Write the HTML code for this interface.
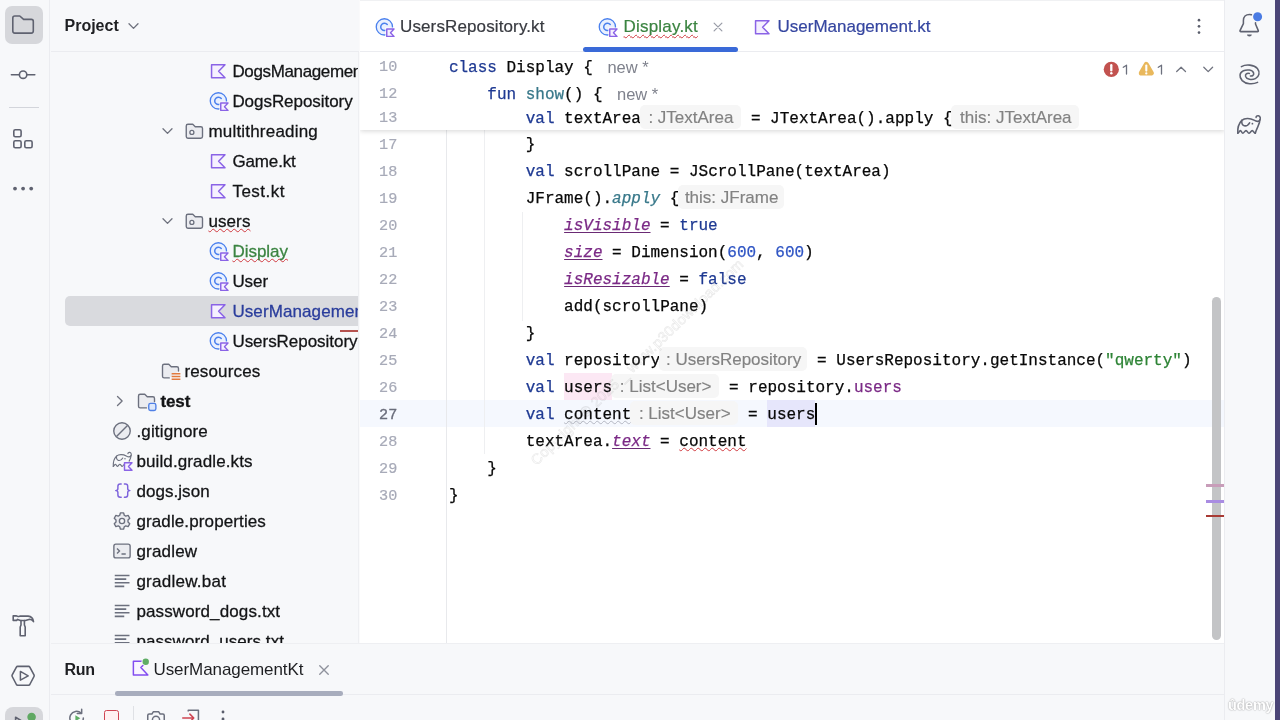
<!DOCTYPE html>
<html>
<head>
<meta charset="utf-8">
<title>Display.kt</title>
<style>
*{box-sizing:border-box;margin:0;padding:0}
html,body{width:1280px;height:720px;overflow:hidden;background:#f7f8fa;font-family:"Liberation Sans",sans-serif;color:#1e1f22}
.abs{position:absolute}
#root{position:relative;width:1280px;height:720px;overflow:hidden;background:#f7f8fa;will-change:transform}
#lstripe{left:0;top:0;width:50px;height:720px;background:#f7f8fa;border-right:1px solid #ebecf0}
#rstripe{left:1224px;top:0;width:52px;height:720px;background:#f7f8fa;border-left:1px solid #ebecf0}
#redge{left:1275px;top:0;width:5px;height:720px;background:#4b4577}
#proj{left:51px;top:0;width:308px;height:643px;background:#f7f8fa;overflow:hidden}
#projhead{left:0;top:0;width:308px;height:52px;border-bottom:1px solid #ebecf0;background:#f7f8fa;z-index:2}
.row{position:absolute;height:30px;line-height:30px;font-size:17px;white-space:nowrap;color:#131416;-webkit-text-stroke:.28px}
.row.green{color:#3b8441}
.row.blue{color:#2a3d9c}
.row.bold{font-weight:700}
.sqr{text-decoration:underline wavy #d03a40 1.45px;text-underline-offset:.8px;text-decoration-skip-ink:none}
#editor{left:359px;top:0;width:865px;height:643px;background:#fff;overflow:hidden;border-left:1px solid #fafafb}
#tabs{left:0;top:0;width:865px;height:52px;border-bottom:1px solid #ebecf0;background:#fff;z-index:5}
.tab{position:absolute;top:0;height:52px;line-height:53px;font-size:17px;white-space:nowrap;color:#1e1f22;-webkit-text-stroke:.2px}
.code{font-family:"Liberation Mono",monospace;font-size:16px;white-space:pre;color:#080808;-webkit-text-stroke:.25px}
.ln{position:absolute;left:0;width:865px;height:27px;line-height:27px}
.ln.cur{background:#f5f8fe}
.ln .n{position:absolute;left:0;width:37.3px;text-align:right;color:#a7aab8;font-family:"Liberation Mono",monospace;font-size:15.2px;margin-top:.3px;-webkit-text-stroke:.2px}
.ln.cur .n{color:#6a6d7b;-webkit-text-stroke:.35px}
.ln .c{position:absolute;top:0}
.kw{color:#1f3a93}
.num{color:#2f55c4}
.str{color:#2e8436}
.prop{color:#7b2a86}
.fn{color:#38788a}
.ext{color:#38788a;font-style:italic}
.ip{color:#7b2a86;font-style:italic;text-decoration:underline;text-decoration-thickness:1.3px;text-underline-offset:1.6px;text-decoration-color:#6a2a74}
.err{text-decoration:underline wavy #d03a40 1.45px;text-underline-offset:1.3px;text-decoration-skip-ink:none}
.unused{text-decoration:underline wavy #b4b7c2 1.2px;text-underline-offset:1.3px;text-decoration-skip-ink:none}
.hlw{background:#fce8f4}
.hlr{background:#e6e6fb}
.hint{position:absolute;font-family:"Liberation Sans",sans-serif;font-size:17px;color:#828282;-webkit-text-stroke:.15px;background:#f6f6f6;border-radius:5px;height:24px;padding-left:1.5px;line-height:26px;top:1.5px;text-align:center;white-space:pre}
.lens{position:absolute;font-family:"Liberation Sans",sans-serif;font-size:16.5px;color:#7f828d;top:0;white-space:pre}
#sticky{left:0;top:52px;width:865px;height:77.5px;background:#fff;z-index:4;box-shadow:0 1px 5px rgba(0,0,0,.17);overflow:hidden}
#codearea{left:0;top:0;width:865px;height:643px}
.guide{position:absolute;width:1px;background:#e8e9ec;z-index:1}
#bottom{left:51px;top:643px;width:1173px;height:77px;background:#f7f8fa;border-top:1px solid #eeeff2}
</style>
</head>
<body>
<div id="root">

<!-- PROJECT PANEL -->
<div id="proj" class="abs">
<svg class="abs" style="left:157.4px;top:61px" width="20" height="20" viewBox="0 0 16 16" overflow="visible" ><path d="M2.85 3H13.6L8.5 8.2L13.6 13.45H2.85Z" fill="#f5f0ff" stroke="#8a63e6" stroke-width="1.2" stroke-linejoin="round"/></svg><div class="row" style="left:181.4px;top:56.9px;letter-spacing:-0.360px">DogsManagement.kt</div>
<svg class="abs" style="left:157.4px;top:91px" width="20" height="20" viewBox="0 0 16 16" overflow="visible" ><circle cx="8.3" cy="7.9" r="6.5" fill="#e9f0fe" stroke="#4a80ee" stroke-width="1.05"/><path d="M10.6 6.0A2.95 2.95 0 1 0 10.6 9.8" fill="none" stroke="#4a80ee" stroke-width="1.2" stroke-linecap="round"/><path d="M9.1 8.4H17V17H9.1Z" fill="#f7f8fa" class="bdg"/><path d="M10.2 9.6H16L13.2 12.55L16 15.5H10.2Z" fill="#f5f0ff" stroke="#8a63e6" stroke-width="1.15" stroke-linejoin="round"/></svg><div class="row" style="left:181.4px;top:86.9px;letter-spacing:-0.047px">DogsRepository</div>
<svg class="abs" style="left:107px;top:121px" width="20" height="20" viewBox="0 0 16 16" overflow="visible" ><path d="M4 6.2L7.6 9.9L11.2 6.2" fill="none" stroke="#70737f" stroke-width="1.05" stroke-linecap="round" stroke-linejoin="round"/></svg><svg class="abs" style="left:133.4px;top:121px" width="20" height="20" viewBox="0 0 16 16" overflow="visible" ><path d="M1.8 3.9V12.4Q1.8 13.75 3.15 13.75H13.45Q14.8 13.75 14.8 12.4V5.9Q14.8 4.55 13.45 4.55H9L7 2.55H3.15Q1.8 2.55 1.8 3.9Z" fill="#ebecf0" stroke="#6c707e" stroke-width="1.1" stroke-linejoin="round"/><circle cx="6.3" cy="9.1" r="1.6" fill="#f7f8fa" stroke="#6c707e" stroke-width="1.05"/></svg><div class="row" style="left:157.4px;top:116.9px;letter-spacing:0.201px">multithreading</div>
<svg class="abs" style="left:157.4px;top:151px" width="20" height="20" viewBox="0 0 16 16" overflow="visible" ><path d="M2.85 3H13.6L8.5 8.2L13.6 13.45H2.85Z" fill="#f5f0ff" stroke="#8a63e6" stroke-width="1.2" stroke-linejoin="round"/></svg><div class="row" style="left:181.4px;top:146.9px;letter-spacing:-0.136px">Game.kt</div>
<svg class="abs" style="left:157.4px;top:181px" width="20" height="20" viewBox="0 0 16 16" overflow="visible" ><path d="M2.85 3H13.6L8.5 8.2L13.6 13.45H2.85Z" fill="#f5f0ff" stroke="#8a63e6" stroke-width="1.2" stroke-linejoin="round"/></svg><div class="row" style="left:181.4px;top:176.9px;letter-spacing:0.496px">Test.kt</div>
<svg class="abs" style="left:107px;top:211px" width="20" height="20" viewBox="0 0 16 16" overflow="visible" ><path d="M4 6.2L7.6 9.9L11.2 6.2" fill="none" stroke="#70737f" stroke-width="1.05" stroke-linecap="round" stroke-linejoin="round"/></svg><svg class="abs" style="left:133.4px;top:211px" width="20" height="20" viewBox="0 0 16 16" overflow="visible" ><path d="M1.8 3.9V12.4Q1.8 13.75 3.15 13.75H13.45Q14.8 13.75 14.8 12.4V5.9Q14.8 4.55 13.45 4.55H9L7 2.55H3.15Q1.8 2.55 1.8 3.9Z" fill="#ebecf0" stroke="#6c707e" stroke-width="1.1" stroke-linejoin="round"/><circle cx="6.3" cy="9.1" r="1.6" fill="#f7f8fa" stroke="#6c707e" stroke-width="1.05"/></svg><div class="row" style="left:157.4px;top:206.9px;letter-spacing:0.104px"><span class="sqr">users</span></div>
<svg class="abs" style="left:157.4px;top:241px" width="20" height="20" viewBox="0 0 16 16" overflow="visible" ><circle cx="8.3" cy="7.9" r="6.5" fill="#e9f0fe" stroke="#4a80ee" stroke-width="1.05"/><path d="M10.6 6.0A2.95 2.95 0 1 0 10.6 9.8" fill="none" stroke="#4a80ee" stroke-width="1.2" stroke-linecap="round"/><path d="M9.1 8.4H17V17H9.1Z" fill="#f7f8fa" class="bdg"/><path d="M10.2 9.6H16L13.2 12.55L16 15.5H10.2Z" fill="#f5f0ff" stroke="#8a63e6" stroke-width="1.15" stroke-linejoin="round"/></svg><div class="row green" style="left:181.4px;top:236.9px;letter-spacing:-0.021px"><span class="sqr">Display</span></div>
<svg class="abs" style="left:157.4px;top:271px" width="20" height="20" viewBox="0 0 16 16" overflow="visible" ><circle cx="8.3" cy="7.9" r="6.5" fill="#e9f0fe" stroke="#4a80ee" stroke-width="1.05"/><path d="M10.6 6.0A2.95 2.95 0 1 0 10.6 9.8" fill="none" stroke="#4a80ee" stroke-width="1.2" stroke-linecap="round"/><path d="M9.1 8.4H17V17H9.1Z" fill="#f7f8fa" class="bdg"/><path d="M10.2 9.6H16L13.2 12.55L16 15.5H10.2Z" fill="#f5f0ff" stroke="#8a63e6" stroke-width="1.15" stroke-linejoin="round"/></svg><div class="row" style="left:181.4px;top:266.9px;letter-spacing:-0.077px">User</div>
<div class="abs" style="left:14px;top:296px;width:303px;height:30px;background:#d9dade;border-radius:5px"></div><svg class="abs" style="left:157.4px;top:301px" width="20" height="20" viewBox="0 0 16 16" overflow="visible" ><path d="M2.85 3H13.6L8.5 8.2L13.6 13.45H2.85Z" fill="#f5f0ff" stroke="#8a63e6" stroke-width="1.2" stroke-linejoin="round"/></svg><div class="row blue" style="left:181.4px;top:296.9px;letter-spacing:0.100px">UserManagement.kt</div>
<svg class="abs" style="left:157.4px;top:331px" width="20" height="20" viewBox="0 0 16 16" overflow="visible" ><circle cx="8.3" cy="7.9" r="6.5" fill="#e9f0fe" stroke="#4a80ee" stroke-width="1.05"/><path d="M10.6 6.0A2.95 2.95 0 1 0 10.6 9.8" fill="none" stroke="#4a80ee" stroke-width="1.2" stroke-linecap="round"/><path d="M9.1 8.4H17V17H9.1Z" fill="#f7f8fa" class="bdg"/><path d="M10.2 9.6H16L13.2 12.55L16 15.5H10.2Z" fill="#f5f0ff" stroke="#8a63e6" stroke-width="1.15" stroke-linejoin="round"/></svg><div class="row" style="left:181.4px;top:326.9px;letter-spacing:-0.037px">UsersRepository</div>
<svg class="abs" style="left:109.4px;top:361px" width="20" height="20" viewBox="0 0 16 16" overflow="visible" ><path d="M7.4 13.5H3.3Q2 13.5 2 12.2V3.9Q2 2.6 3.3 2.6H7L9 4.6H13.5Q14.8 4.6 14.8 5.9V8" fill="#ebecf0" stroke="#6c707e" stroke-width="1.1" stroke-linejoin="round" stroke-linecap="round"/><path d="M9.3 10.2H16.3M9.3 12.4H16.3M9.3 14.6H16.3" stroke="#e27a3e" stroke-width="1.25"/></svg><div class="row" style="left:133.4px;top:356.9px;letter-spacing:0.151px">resources</div>
<svg class="abs" style="left:59px;top:391px" width="20" height="20" viewBox="0 0 16 16" overflow="visible" ><path d="M6 4.4L9.7 8L6 11.6" fill="none" stroke="#70737f" stroke-width="1.05" stroke-linecap="round" stroke-linejoin="round"/></svg><svg class="abs" style="left:85.4px;top:391px" width="20" height="20" viewBox="0 0 16 16" overflow="visible" ><path d="M8.4 13.5H3.3Q2 13.5 2 12.2V3.9Q2 2.6 3.3 2.6H7L9 4.6H13.5Q14.8 4.6 14.8 5.9V8.5" fill="#ebecf0" stroke="#6c707e" stroke-width="1.1" stroke-linejoin="round" stroke-linecap="round"/><rect x="10.2" y="9.9" width="5.7" height="5.7" rx="1.4" fill="#dde8fb" stroke="#4f80e6" stroke-width="1.1"/></svg><div class="row bold" style="left:109.4px;top:386.9px;letter-spacing:-0.109px">test</div>
<svg class="abs" style="left:61.4px;top:421px" width="20" height="20" viewBox="0 0 16 16" overflow="visible" ><circle cx="8" cy="8" r="6.6" fill="#ebecf0" stroke="#6c707e" stroke-width="1.1"/><path d="M3.6 12.4L12.4 3.6" stroke="#6c707e" stroke-width="1.1"/></svg><div class="row" style="left:85.4px;top:416.9px;letter-spacing:0.166px">.gitignore</div>
<svg class="abs" style="left:61.4px;top:451px" width="20" height="20" viewBox="0 0 16 16" overflow="visible" ><g transform="scale(0.8)"><g transform="translate(1.3 1.2) scale(0.8) translate(-11.8 -15.5)" fill="none" stroke="#6c707e" stroke-width="1.45" stroke-linecap="round" stroke-linejoin="round"><path d="M11.8 33.2C11.4 27.5 13.2 23 15.8 20.4C18.5 18 24 17.8 28 20.2C30 21.4 32.2 21.8 33.4 20.6C35 19 34.4 16.2 32.4 15.8C31 15.5 29.9 16.4 30.1 17.4"/><path d="M33.9 19.8C34 22 33 24.4 31.6 26.6"/><path d="M11.8 33.2C12.8 33.2 13.4 30.6 14.4 30.6C15.4 30.6 15.8 33.2 16.8 33.2C18 33.2 18.8 30.6 20 30.6C21.2 30.6 21.8 33.2 22.9 33.2C23.6 33.2 24.2 32 24.8 31.2"/><path d="M15.8 20.4C15.6 23 16.6 25.4 18.2 25.8C20.4 26.2 22.6 24.6 23.6 22.8"/><circle cx="26.4" cy="23.7" r="0.9" fill="#6c707e" stroke="none"/></g><path d="M12.5 11.8H20L16.5 15.6L20 19.3H12.5Z" fill="#f5f0ff" stroke="#8a63e6" stroke-width="1.45" stroke-linejoin="round"/></g></svg><div class="row" style="left:85.4px;top:446.9px;letter-spacing:0.122px">build.gradle.kts</div>
<svg class="abs" style="left:61.4px;top:481px" width="20" height="20" viewBox="0 0 16 16" overflow="visible" ><g transform="scale(0.8)" fill="none" stroke="#7d63dc" stroke-width="1.45" stroke-linecap="round" stroke-linejoin="round"><path d="M9.2 3H8.2Q5.9 3 5.9 5.2V7.6Q5.9 9.6 3.7 9.6Q5.9 9.6 5.9 11.6V14Q5.9 16.2 8.2 16.2H9.2"/><path d="M12.4 3H13.4Q15.7 3 15.7 5.2V7.6Q15.7 9.6 17.9 9.6Q15.7 9.6 15.7 11.6V14Q15.7 16.2 13.4 16.2H12.4"/></g></svg><div class="row" style="left:85.4px;top:476.9px;letter-spacing:0.058px">dogs.json</div>
<svg class="abs" style="left:61.4px;top:511px" width="20" height="20" viewBox="0 0 16 16" overflow="visible" ><path d="M6.7 1.5H9.3L9.8 3.4L11 4.1L12.9 3.5L14.2 5.8L12.8 7.2V8.8L14.2 10.2L12.9 12.5L11 11.9L9.8 12.6L9.3 14.5H6.7L6.2 12.6L5 11.9L3.1 12.5L1.8 10.2L3.2 8.8V7.2L1.8 5.8L3.1 3.5L5 4.1L6.2 3.4Z" fill="#ebecf0" stroke="#6c707e" stroke-width="1.1" stroke-linejoin="round"/><circle cx="8" cy="8" r="2.1" fill="#f7f8fa" stroke="#6c707e" stroke-width="1.1"/></svg><div class="row" style="left:85.4px;top:506.9px;letter-spacing:0.119px">gradle.properties</div>
<svg class="abs" style="left:61.4px;top:541px" width="20" height="20" viewBox="0 0 16 16" overflow="visible" ><rect x="1.5" y="2.5" width="13" height="11" rx="1.6" fill="#ebecf0" stroke="#6c707e" stroke-width="1.1"/><path d="M4 6L6 8L4 10M7.6 10.4H11" fill="none" stroke="#6c707e" stroke-width="1.1"/></svg><div class="row" style="left:85.4px;top:536.9px;letter-spacing:0.193px">gradlew</div>
<svg class="abs" style="left:61.4px;top:571px" width="20" height="20" viewBox="0 0 16 16" overflow="visible" ><path d="M2.2 3.6H14M2.2 6.5H11.4M2.2 9.4H14M2.2 12.3H9.8" stroke="#6c707e" stroke-width="1.25"/></svg><div class="row" style="left:85.4px;top:566.9px;letter-spacing:0.268px">gradlew.bat</div>
<svg class="abs" style="left:61.4px;top:601px" width="20" height="20" viewBox="0 0 16 16" overflow="visible" ><path d="M2.2 3.6H14M2.2 6.5H11.4M2.2 9.4H14M2.2 12.3H9.8" stroke="#6c707e" stroke-width="1.25"/></svg><div class="row" style="left:85.4px;top:596.9px;letter-spacing:0.121px">password_dogs.txt</div>
<svg class="abs" style="left:61.4px;top:631px" width="20" height="20" viewBox="0 0 16 16" overflow="visible" ><path d="M2.2 3.6H14M2.2 6.5H11.4M2.2 9.4H14M2.2 12.3H9.8" stroke="#6c707e" stroke-width="1.25"/></svg><div class="row" style="left:85.4px;top:626.9px;letter-spacing:0.064px">password_users.txt</div>
  <div class="abs" style="left:289px;top:330px;width:19px;height:2px;background:#b5524f"></div>
  <div id="projhead" class="abs">
    <div class="abs" style="left:13.5px;top:0;height:52px;line-height:51px;font-size:16px;font-weight:700;color:#1e1f22">Project</div>
    <svg class="abs" style="left:73px;top:16px" width="20" height="20" viewBox="0 0 16 16"><path d="M4 6.2L7.6 9.9L11.2 6.2" fill="none" stroke="#70737f" stroke-width="1.05" stroke-linecap="round" stroke-linejoin="round"/></svg>
  </div>
</div>

<div class="abs" style="left:358px;top:0;width:1px;height:643px;background:#eeeff2"></div>
<!-- EDITOR -->
<div id="editor" class="abs">
  <div id="codearea" class="abs">
    <div class="guide" style="left:85.6px;top:130px;height:513px"></div>
    <div class="guide" style="left:124.2px;top:130px;height:324px;background:#eeeff1"></div>
    <div class="guide" style="left:162.4px;top:212px;height:109px;background:#eeeff1"></div>
<div class="ln" style="top:130px"><span class="n" style="top:1.8px">17</span><span class="c code " style="left:88.90px;top:1.8px">        }</span></div>
<div class="ln" style="top:157px"><span class="n" style="top:1.8px">18</span><span class="c code kw" style="left:165.70px;top:1.8px">val</span><span class="c code " style="left:194.50px;top:1.8px"> scrollPane = JScrollPane(textArea)</span></div>
<div class="ln" style="top:184px"><span class="n" style="top:1.8px">19</span><span class="c code " style="left:88.90px;top:1.8px">        JFrame().</span><span class="c code ext" style="left:252.10px;top:1.8px">apply</span><span class="c code " style="left:300.10px;top:1.8px"> {</span><span class="hint" style="left:318.00px;width:105.80px;top:1.0px">this: JFrame</span></div>
<div class="ln" style="top:211px"><span class="n" style="top:1.8px">20</span><span class="c code ip" style="left:204.10px;top:1.8px">isVisible</span><span class="c code " style="left:290.50px;top:1.8px"> = </span><span class="c code kw" style="left:319.30px;top:1.8px">true</span></div>
<div class="ln" style="top:238px"><span class="n" style="top:1.8px">21</span><span class="c code ip" style="left:204.10px;top:1.8px">size</span><span class="c code " style="left:242.50px;top:1.8px"> = Dimension(</span><span class="c code num" style="left:367.30px;top:1.8px">600</span><span class="c code " style="left:396.10px;top:1.8px">, </span><span class="c code num" style="left:415.30px;top:1.8px">600</span><span class="c code " style="left:444.10px;top:1.8px">)</span></div>
<div class="ln" style="top:265px"><span class="n" style="top:1.8px">22</span><span class="c code ip" style="left:204.10px;top:1.8px">isResizable</span><span class="c code " style="left:309.70px;top:1.8px"> = </span><span class="c code kw" style="left:338.50px;top:1.8px">false</span></div>
<div class="ln" style="top:292px"><span class="n" style="top:1.8px">23</span><span class="c code " style="left:88.90px;top:1.8px">            add(scrollPane)</span></div>
<div class="ln" style="top:319px"><span class="n" style="top:1.8px">24</span><span class="c code " style="left:88.90px;top:1.8px">        }</span></div>
<div class="ln" style="top:346px"><span class="n" style="top:1.8px">25</span><span class="c code kw" style="left:165.70px;top:1.8px">val</span><span class="c code " style="left:194.50px;top:1.8px"> repository</span><span class="hint" style="left:298.80px;width:148.20px;top:1.0px">: UsersRepository</span><span class="c code " style="left:447.50px;top:1.8px"> = UsersRepository.getInstance(</span><span class="c code str" style="left:745.10px;top:1.8px">&quot;qwerty&quot;</span><span class="c code " style="left:821.90px;top:1.8px">)</span></div>
<div class="ln" style="top:373px"><span class="n" style="top:1.8px">26</span><span class="c code kw" style="left:165.70px;top:1.8px">val</span><span class="abs hlw" style="left:204.10px;top:0;width:48.00px;height:27px"></span><span class="c code " style="left:204.10px;top:1.8px">users</span><span class="hint" style="left:250.80px;width:108.20px;top:1.0px">: List&lt;User&gt;</span><span class="c code " style="left:359.50px;top:1.8px"> = repository.</span><span class="c code prop" style="left:493.90px;top:1.8px">users</span></div>
<div class="ln cur" style="top:400px"><span class="n" style="top:1.8px">27</span><span class="c code kw" style="left:165.70px;top:1.8px">val</span><span class="c code unused" style="left:204.10px;top:1.8px">content</span><span class="hint" style="left:270.00px;width:108.00px;top:1.0px">: List&lt;User&gt;</span><span class="c code " style="left:378.50px;top:1.8px"> = </span><span class="abs hlr" style="left:407.30px;top:0;width:48.00px;height:27px"></span><span class="c code " style="left:407.30px;top:1.8px">users</span><span class="abs" style="left:454.50px;top:3px;width:2px;height:22px;background:#000"></span></div>
<div class="ln" style="top:427px"><span class="n" style="top:1.8px">28</span><span class="c code " style="left:88.90px;top:1.8px">        textArea.</span><span class="c code ip" style="left:252.10px;top:1.8px">text</span><span class="c code " style="left:290.50px;top:1.8px"> = </span><span class="c code err" style="left:319.30px;top:1.8px">content</span></div>
<div class="ln" style="top:454px"><span class="n" style="top:1.8px">29</span><span class="c code " style="left:88.90px;top:1.8px">    }</span></div>
<div class="ln" style="top:481px"><span class="n" style="top:1.8px">30</span><span class="c code " style="left:88.90px;top:1.8px">}</span></div>
  </div>
  <div id="sticky" class="abs">
    <div class="abs" style="left:0;top:-52px;width:865px;height:200px">
<div class="ln" style="top:54.5px"><span class="n" style="top:-0.65px">10</span><span class="c code kw" style="left:88.90px;top:0.35px">class</span><span class="c code " style="left:136.90px;top:0.35px"> Display {</span><span class="lens" style="left:247.40px;top:-0.7px">new *</span></div>
<div class="ln" style="top:81.5px"><span class="n" style="top:-0.65px">12</span><span class="c code kw" style="left:127.30px;top:0.35px">fun</span><span class="c code fn" style="left:165.70px;top:0.35px">show</span><span class="c code " style="left:204.10px;top:0.35px">() {</span><span class="lens" style="left:257.00px;top:-0.7px">new *</span></div>
<div class="ln" style="top:106.0px"><span class="n" style="top:-1.0px">13</span><span class="c code kw" style="left:165.70px;top:-0.5px">val</span><span class="c code " style="left:194.50px;top:-0.5px"> textArea</span><span class="hint" style="left:279.60px;width:101.20px;top:-1px">: JTextArea</span><span class="c code " style="left:381.30px;top:-0.5px"> = JTextArea().apply {</span><span class="hint" style="left:591.20px;width:127.80px;top:-1px">this: JTextArea</span></div>
    </div>
  </div>
  <!-- inspections widget -->
  <svg class="abs" style="left:730px;top:50px;z-index:6" width="140" height="40" viewBox="1090 50 140 40" fill="none" stroke-linecap="round" stroke-linejoin="round">
    <circle cx="1111.3" cy="69.4" r="7.6" fill="#c2524f"/>
    <path d="M1111.3 65.2V70.4" stroke="#fff" stroke-width="2.3"/><circle cx="1111.3" cy="73.3" r="1.25" fill="#fff"/>
    <path d="M1123.3 67.3L1126.5 65.2V74" stroke="#6c707e" stroke-width="1.3"/>
    <path d="M1146.3 64.6L1151.2 73H1141.4Z" fill="#e9b85c" stroke="#e9b85c" stroke-width="5.2"/>
    <path d="M1146.3 65.6V70.6" stroke="#fff" stroke-width="2.1"/><circle cx="1146.3" cy="73.4" r="1.15" fill="#fff"/>
    <path d="M1158.3 67.3L1161.5 65.2V74" stroke="#6c707e" stroke-width="1.3"/>
    <path d="M1176.7 71.5L1181.1 67.3L1185.5 71.5" stroke="#70737f" stroke-width="1.3"/>
    <path d="M1203.8 67.2L1208.2 71.6L1212.6 67.2" stroke="#70737f" stroke-width="1.3"/>
  </svg>
  <!-- scrollbar -->
  <div class="abs" style="left:851.5px;top:297px;width:9.5px;height:343px;border-radius:5px;background:#c3c4c6"></div>
  <div class="abs" style="left:846px;top:484px;width:18px;height:2.5px;background:#c89db9"></div>
  <div class="abs" style="left:846px;top:500px;width:18px;height:2.5px;background:#a98ce2"></div>
  <div class="abs" style="left:846px;top:514.6px;width:18px;height:2.6px;background:#a83a34"></div>
  <!-- watermark -->
  <div class="abs" style="left:127px;top:353px;width:300px;height:18px;line-height:18px;text-align:center;font-size:14.4px;color:#fff;-webkit-text-stroke:.7px #555;opacity:.12;transform:rotate(-44deg);transform-origin:50% 50%;white-space:nowrap;letter-spacing:.25px;z-index:7">Copyright © 2025 _ www.p30download.com</div>

  <!-- TABS -->
  <div class="abs" style="left:0;top:0;width:865px;height:1px;background:#f0f1f3;z-index:8"></div>
  <div id="tabs" class="abs">
    <svg class="abs" style="left:13.5px;top:17px" width="20" height="20" viewBox="0 0 16 16" overflow="visible"><circle cx="8.3" cy="7.9" r="6.5" fill="#e9f0fe" stroke="#4a80ee" stroke-width="1.05"/><path d="M10.6 6.0A2.95 2.95 0 1 0 10.6 9.8" fill="none" stroke="#4a80ee" stroke-width="1.2" stroke-linecap="round"/><path d="M9.1 8.4H17V17H9.1Z" fill="#ffffff"/><path d="M10.2 9.6H16L13.2 12.55L16 15.5H10.2Z" fill="#f5f0ff" stroke="#8a63e6" stroke-width="1.15" stroke-linejoin="round"/></svg>
    <div class="tab" style="left:40px;letter-spacing:.125px;color:#383a40">UsersRepository.kt</div>
    <svg class="abs" style="left:237px;top:17px" width="20" height="20" viewBox="0 0 16 16" overflow="visible"><circle cx="8.3" cy="7.9" r="6.5" fill="#e9f0fe" stroke="#4a80ee" stroke-width="1.05"/><path d="M10.6 6.0A2.95 2.95 0 1 0 10.6 9.8" fill="none" stroke="#4a80ee" stroke-width="1.2" stroke-linecap="round"/><path d="M9.1 8.4H17V17H9.1Z" fill="#ffffff"/><path d="M10.2 9.6H16L13.2 12.55L16 15.5H10.2Z" fill="#f5f0ff" stroke="#8a63e6" stroke-width="1.15" stroke-linejoin="round"/></svg>
    <div class="tab" style="left:263.5px;color:#3b8441;letter-spacing:.2px"><span class="sqr" style="text-underline-offset:1.9px">Display.kt</span></div>
    <svg class="abs" style="left:348px;top:17px" width="20" height="20" viewBox="0 0 16 16"><path d="M4.9 4.9L11.1 11.1M11.1 4.9L4.9 11.1" stroke="#9a9da8" stroke-width="1" stroke-linecap="round"/></svg>
    <div class="abs" style="left:223px;top:47px;width:155px;height:5px;border-radius:2.5px;background:#3a6ad8"></div>
    <svg class="abs" style="left:391.5px;top:17px" width="20" height="20" viewBox="0 0 16 16"><path d="M2.85 3H13.6L8.5 8.2L13.6 13.45H2.85Z" fill="#f5f0ff" stroke="#8a63e6" stroke-width="1.2" stroke-linejoin="round"/></svg>
    <div class="tab" style="left:417.5px;color:#3546a0;letter-spacing:0px">UserManagement.kt</div>
    <svg class="abs" style="left:829px;top:16px" width="20" height="20" viewBox="0 0 16 16"><circle cx="8" cy="3.3" r="1.05" fill="#5a5d6b"/><circle cx="8" cy="8.25" r="1.05" fill="#5a5d6b"/><circle cx="8" cy="13.25" r="1.05" fill="#5a5d6b"/></svg>
  </div>
</div>

<!-- BOTTOM PANEL -->
<div id="bottom" class="abs">
  <div class="abs" style="left:13.5px;top:11px;height:30px;line-height:30px;font-size:16px;font-weight:700;letter-spacing:-.3px">Run</div>
  <svg class="abs" style="left:79.5px;top:14px" width="19" height="19" viewBox="0 0 16 16"><path d="M2 2.8H9.2M2 2.8V14.4H14.2L8.3 8L10.6 5.6" fill="#faf5ff" stroke="#834df0" stroke-width="1.25" stroke-linejoin="round" stroke-linecap="round"/><circle cx="12.4" cy="3.2" r="3.6" fill="#f7f8fa"/><circle cx="12.4" cy="3.2" r="2.7" fill="#5fad65"/></svg>
  <div class="abs" style="left:102.5px;top:11px;height:30px;line-height:30px;font-size:17px;letter-spacing:-.08px;white-space:nowrap">UserManagementKt</div>
  <svg class="abs" style="left:263px;top:16px" width="20" height="20" viewBox="0 0 16 16"><path d="M4.6 4.6L11.4 11.4M11.4 4.6L4.6 11.4" stroke="#8e919c" stroke-width="1.1" stroke-linecap="round"/></svg>
  <div class="abs" style="left:0;top:50px;width:1173px;height:1px;background:#ebecf0"></div>
  <div class="abs" style="left:64px;top:47px;width:228px;height:4.5px;border-radius:2.25px;background:#a8adbd"></div>
  
  <!-- toolbar (clipped) -->
  <svg class="abs" style="left:15px;top:63.3px" width="22" height="22" viewBox="0 0 16 16"><path d="M12.6 8A4.9 4.9 0 1 1 11 4.4" fill="none" stroke="#6c707e" stroke-width="1.1" stroke-linecap="round"/><path d="M11.4 1.6V4.8H8.2" fill="none" stroke="#6c707e" stroke-width="1.1" stroke-linecap="round" stroke-linejoin="round"/><path d="M6.8 6L10.4 8.2L6.8 10.4Z" fill="#5fad65"/></svg>
  <div class="abs" style="left:53px;top:65.5px;width:15px;height:15px;border:1.5px solid #cf4452;border-radius:2.5px;background:#fff0f1"></div>
  <div class="abs" style="left:82px;top:62px;width:1px;height:20px;background:#dfe1e5"></div>
  <svg class="abs" style="left:94px;top:63.5px" width="22" height="22" viewBox="0 0 16 16"><path d="M2 5.4Q2 4.4 3 4.4H5L6 2.8H10L11 4.4H13Q14 4.4 14 5.4V12Q14 13 13 13H3Q2 13 2 12Z" fill="none" stroke="#6c707e" stroke-width="1.1" stroke-linejoin="round"/><circle cx="8" cy="8.6" r="2.6" fill="none" stroke="#6c707e" stroke-width="1.1"/></svg>
  <svg class="abs" style="left:129px;top:63px" width="22" height="22" viewBox="0 0 16 16"><path d="M6 3.2V2.4H13.4V13.6H6V12.8" fill="none" stroke="#6c707e" stroke-width="1.1" stroke-linejoin="round"/><path d="M2 8H10M7.2 5.2L10 8L7.2 10.8" fill="none" stroke="#cf4452" stroke-width="1.1" stroke-linecap="round" stroke-linejoin="round"/></svg>
  <svg class="abs" style="left:162px;top:61px" width="20" height="20" viewBox="0 0 16 16"><circle cx="8" cy="5.6" r="1.15" fill="#5a5d6b"/><circle cx="8" cy="11.2" r="1.15" fill="#5a5d6b"/></svg>
</div>

<!-- LEFT STRIPE -->
<div id="lstripe" class="abs">
  <div class="abs" style="left:5px;top:6px;width:38px;height:38px;border-radius:7px;background:#d6d7db"></div>
  <div class="abs" style="left:5px;top:707.4px;width:38px;height:38px;border-radius:8px;background:#d6d7db"></div>
  <div class="abs" style="left:9px;top:107px;width:30px;height:1px;background:#d3d5db"></div>
  <svg class="abs" style="left:0;top:0" width="50" height="720" viewBox="0 0 50 720" fill="none" stroke="#5f6270" stroke-width="1.6" stroke-linejoin="round" stroke-linecap="round">
    <path d="M12.8 18Q12.8 16 14.8 16H19.8L23.6 19.4H31.3Q33.3 19.4 33.3 21.4V31.1Q33.3 33.1 31.3 33.1H14.8Q12.8 33.1 12.8 31.1Z"/>
    <path d="M11.4 74.7H19.2M27 74.7H34.8"/><circle cx="23.1" cy="74.7" r="3.7"/>
    <rect x="13.8" y="129.7" width="7.3" height="7" rx="1.5"/><rect x="13.8" y="140.7" width="7.3" height="7" rx="1.5"/><rect x="24.8" y="140.7" width="7.3" height="7" rx="1.5"/>
    <g fill="#5f6270" stroke="none"><circle cx="15" cy="188.6" r="1.9"/><circle cx="23.1" cy="188.6" r="1.9"/><circle cx="31.2" cy="188.6" r="1.9"/></g>
    <g transform="translate(0 600)">
      <path d="M13.2 15.9H16.4Q18 17 19.8 16.1H28.2C31.2 16.3 33 18.6 33.5 21.6C32.2 20 31 19.3 29.8 19.2L25.4 20.5H20.4L17.6 19.4L16.6 20.4H13.2Z"/>
      <path d="M21 20.6V25L20.2 27V35.8H25.2V27L24.4 25V20.6"/>
    </g>
    <path d="M17.6 666.4H28.6Q29.4 666.4 29.8 667.1L34 674.9Q34.4 675.7 34 676.5L29.8 684.5Q29.4 685.2 28.6 685.2H17.6Q16.8 685.2 16.4 684.5L12.2 676.5Q11.8 675.7 12.2 674.9L16.4 667.1Q16.8 666.4 17.6 666.4Z"/>
    <path d="M20.4 671.4L28.2 675.8L20.4 680.2Z" stroke-width="1.5"/>
    <path d="M15.6 717.2L30 726L15.6 734.8Z"/>
    <circle cx="31.6" cy="717.1" r="5.4" fill="#d6d7db" stroke="none"/>
    <circle cx="31.6" cy="717.1" r="4.3" fill="#5fa862" stroke="none"/>
  </svg>
</div>

<!-- RIGHT STRIPE -->
<div id="rstripe" class="abs">
  <svg class="abs" style="left:1px;top:0" width="50" height="150" viewBox="0 0 50 150" fill="none" stroke="#5f6270" stroke-width="1.55" stroke-linejoin="round" stroke-linecap="round">
    <path d="M25.4 14.7C24.8 14.5 24.1 14.4 23.4 14.4C19.8 14.4 17.4 17 17.4 20.6V23.6L14 30.6Q13.8 31.6 14.8 31.6H31.6Q32.6 31.6 32.3 30.6L29.5 24V22.8"/>
    <path d="M21 34.4H25.8A2.4 2.1 0 0 1 21 34.4Z" fill="#5f6270" stroke="none"/>
    <circle cx="31.6" cy="16.7" r="4.5" fill="#4a7be3" stroke="none"/>
    <g transform="translate(0 50)">
      <path d="M15.4 16.6C20 14 28 14.6 31.4 18.6C34.4 22.4 33 27 29.4 28.6C25.6 30.2 20.6 29.4 19.6 26.4C19 24.4 20.8 22.8 23.4 23.4"/>
      <path d="M31.6 32.4C27 34.6 20 34.4 16.2 30.6C12.8 27 13.4 22.6 17.4 20.8C21 19.2 26.6 19.8 27.6 23C28.2 25 26.4 26.4 24.4 26"/>
    </g>
    <g transform="translate(0 100)">
      <path d="M11.8 33.2C11.4 27.5 13.2 23 15.8 20.4C18.5 18 24 17.8 28 20.2C30 21.4 32.2 21.8 33.4 20.6C35 19 34.4 16.2 32.4 15.8C31 15.5 29.9 16.4 30.1 17.4"/>
      <path d="M33.9 19.8C34 24 31 27 29.3 33.2"/>
      <path d="M11.8 33.2C12.8 33.2 13.4 30.6 14.4 30.6C15.4 30.6 15.8 33.2 16.8 33.2C18 33.2 18.8 30.6 20 30.6C21.2 30.6 21.8 33.2 22.9 33.2C24.1 33.2 25 30.6 26.2 30.6C27.4 30.6 28.2 33.2 29.3 33.2"/>
      <path d="M15.8 20.4C15.6 23 16.6 25.4 18.2 25.8C20.4 26.2 22.6 24.6 23.6 22.8"/>
      <circle cx="26.4" cy="23.7" r="0.9" fill="#5f6270" stroke="none"/>
    </g>
  </svg>
  <div class="abs" style="left:3px;top:697px;font-size:14.5px;font-weight:700;color:#fff;letter-spacing:-.3px;text-shadow:0 0 2px rgba(0,0,0,.35),0 0 1px rgba(0,0,0,.3);opacity:.9">ûdemy</div>
</div>
<div id="redge" class="abs"></div>

</div>
</body>
</html>
